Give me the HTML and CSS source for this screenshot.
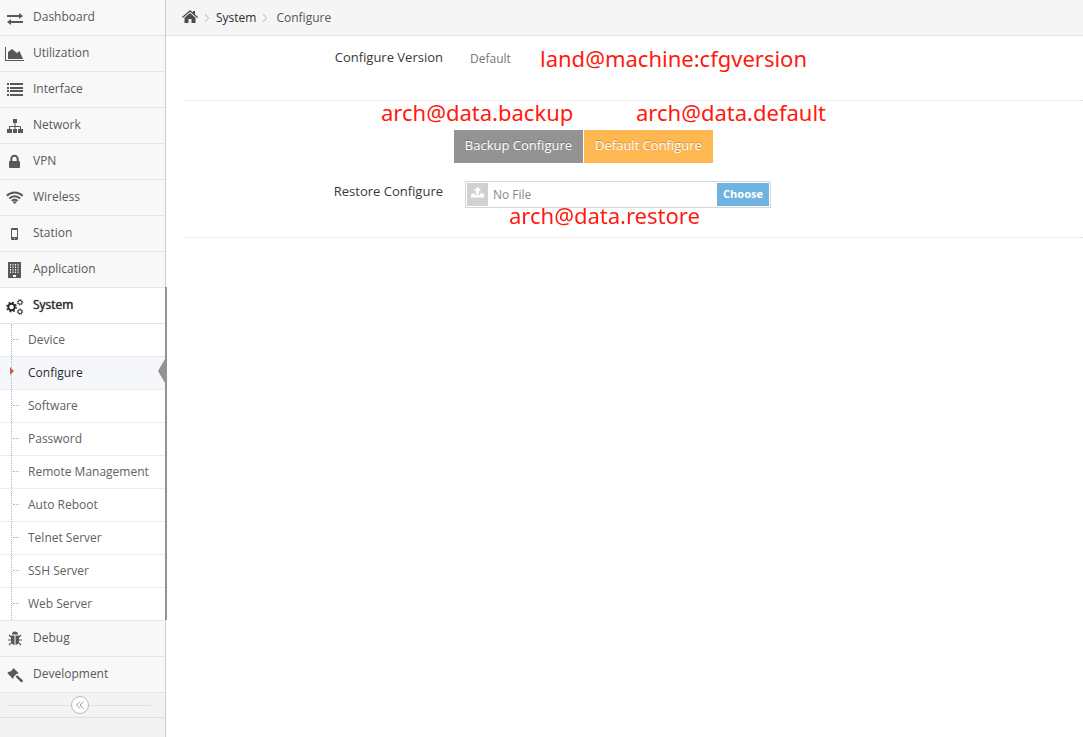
FILE: index.html
```html
<!DOCTYPE html>
<html lang="en">
<head>
<meta charset="utf-8">
<title>System - Configure</title>
<link rel="stylesheet" href="styles.css">
</head>
<body>
<div class="layout">
  <nav class="sidebar" aria-label="Main">
    <ul class="menu">
      <li><a href="#"><svg class="icon" viewBox="0 0 20 18"><path d="M2 5h12V3l4 3-4 3V7H2zM18 11H6V9l-4 3 4 3v-2h12z"/></svg><span>Dashboard</span></a></li>
      <li><a href="#"><svg class="icon" viewBox="0 0 20 18"><path d="M0 1h1v13h18v1H0z"/><path d="M3 13V6l4-3 5 4 2.500-2L18 13z"/></svg><span>Utilization</span></a></li>
      <li><a href="#"><svg class="icon" viewBox="0 0 20 18"><path d="M2 1h2v2H2zM5 1h13v2H5zM2 5h2v2H2zM5 5h13v2H5zM2 8h2v2H2zM5 8h13v2H5zM2 12h2v2H2zM5 12h13v2H5z"/></svg><span>Interface</span></a></li>
      <li><a href="#"><svg class="icon" viewBox="0 0 20 18"><path d="M8 1h4v4H8zM2 11h5v4H2zM8 11h4v4H8zM13 11h5v4h-5z"/><path d="M10 5v7M4.500 12V8.500h11V12" fill="none" stroke="currentColor"/></svg><span>Network</span></a></li>
      <li><a href="#"><svg class="icon" viewBox="0 0 20 18"><rect x="4" y="7" width="11" height="7" rx="1"/><path d="M6.300 8V5a3.200 3.200 0 0 1 6.400 0v3" fill="none" stroke="currentColor" stroke-width="2"/></svg><span>VPN</span></a></li>
      <li><a href="#"><svg class="icon" viewBox="0 0 20 18"><path d="M1.800 5.800a11.300 11.300 0 0 1 15.800 0M4.300 8.500a7.600 7.600 0 0 1 10.800 0M6.900 11a4 4 0 0 1 5.600 0" fill="none" stroke="currentColor" stroke-width="2"/><path d="M7.900 12.200a2.500 2.500 0 0 1 3.600 0L9.700 14z"/></svg><span>Wireless</span></a></li>
      <li><a href="#"><svg class="icon" viewBox="0 0 20 18"><path fill-rule="evenodd" d="M7 2h5q1 0 1 1v10q0 1-1 1H7q-1 0-1-1V3q0-1 1-1zm0 2v7h5V4zm2 8v1h1v-1z"/></svg><span>Station</span></a></li>
      <li><a href="#"><svg class="icon" viewBox="0 0 20 18"><path d="M3 0h13v16H3z"/><path d="M5.500 2v10M8 2v10M10.500 2v10M13 2v10" stroke="#f8f8f8" stroke-dasharray="1.500 1"/><path d="M8 13h3v2H8z" fill="#f8f8f8"/></svg><span>Application</span></a></li>
      <li class="open">
        <a href="#" aria-expanded="true"><svg class="icon" viewBox="0 0 20 18"><g fill="none" stroke="currentColor"><circle cx="6.500" cy="9" r="3.200" stroke-width="1.900"/><circle cx="6.500" cy="9" r="4.600" stroke-width="1.600" stroke-dasharray="1.800 1.810"/><circle cx="15" cy="4.300" r="1.900"/><circle cx="15" cy="4.300" r="2.700" stroke-dasharray="1.100 1.020"/><circle cx="15" cy="13.700" r="1.900"/><circle cx="15" cy="13.700" r="2.700" stroke-dasharray="1.100 1.020"/></g></svg><span>System</span></a>
        <ul class="submenu">
          <li><a href="#">Device</a></li>
          <li class="active"><a href="#" aria-current="page">Configure</a></li>
          <li><a href="#">Software</a></li>
          <li><a href="#">Password</a></li>
          <li><a href="#">Remote Management</a></li>
          <li><a href="#">Auto Reboot</a></li>
          <li><a href="#">Telnet Server</a></li>
          <li><a href="#">SSH Server</a></li>
          <li><a href="#">Web Server</a></li>
        </ul>
      </li>
      <li><a href="#"><svg class="icon" viewBox="0 0 20 18"><path d="M7 3.500a3 3 0 0 1 6 0zM6 4.500h3.500V14Q6 13.500 6 10zM10.500 4.500H14V10q0 3.500-3.500 4z"/><path d="M6.500 6.500L4 4M13.500 6.500L16 4M6 9H3M14 9h3M6.500 11.500L4 14M13.500 11.500L16 14" fill="none" stroke="currentColor" stroke-width="1.200"/></svg><span>Debug</span></a></li>
      <li><a href="#"><svg class="icon" viewBox="0 0 20 18"><path d="M8.500 1l5 5-1 1-.8-.3-1.200 1.300 1 1 .8-.8 5.400 5q.6.900-.2 1.700t-1.700.2l-5.200-5.400.7-.7-1-1-1.700 1.700.3.800-1.200 1.200L2.300 6l1.200-1.200.8.300L7.700 2.700 7.500 2z"/></svg><span>Development</span></a></li>
    </ul>
    <div class="collapse">
      <button type="button" aria-label="Collapse sidebar"><svg viewBox="0 0 10 10"><path d="M5 1.500L1.500 5 5 8.500M8.500 1.500L5 5l3.500 3.500"/></svg></button>
    </div>
  </nav>

  <div class="main">
    <nav class="breadcrumb" aria-label="Breadcrumb">
      <a href="#" aria-label="Home"><svg class="home" viewBox="0 0 16 14"><path d="M0 7l8-7 3 2.600V1h2v3.400L16 7l-.8 1L8 1.800.8 8z"/><path d="M8 3l5.500 4.700V13H9.500V9h-3v4h-4V7.700z"/></svg></a>
      <svg class="chevron" viewBox="0 0 6 8"><path d="M1 0l3.500 4L1 8"/></svg>
      <a href="#">System</a>
      <svg class="chevron" viewBox="0 0 6 8"><path d="M1 0l3.500 4L1 8"/></svg>
      <span class="current">Configure</span>
    </nav>
    <main class="content">
      <section class="row version">
        <span class="label">Configure Version</span>
        <span class="value">Default</span>
        <span class="note note-version">land@machine:cfgversion</span>
      </section>
      <section class="panel">
        <span class="note note-backup">arch@data.backup</span>
        <span class="note note-default">arch@data.default</span>
        <div class="actions">
          <button type="button" class="btn">Backup Configure</button>
          <button type="button" class="btn btn-warning">Default Configure</button>
        </div>
        <div class="row restore">
          <label class="label" for="restore-file">Restore Configure</label>
          <div class="file">
            <span class="upload"><svg viewBox="0 0 14 13"><path d="M7 0l4 4H8.500v4h-3V4H3z"/><path d="M1 7h3.500v2h5V7H13q1 0 1 1v2.500q0 1-1 1H1q-1 0-1-1V8q0-1 1-1z"/></svg></span>
            <span class="filename">No File</span>
            <span class="choose">Choose</span>
            <input type="file" id="restore-file">
          </div>
          <span class="note note-restore">arch@data.restore</span>
        </div>
      </section>
    </main>
  </div>
</div>
</body>
</html>
```

FILE: styles.css
```css
* { box-sizing: border-box; }
body {
  margin: 0;
  font: 12px/20px "Open Sans", sans-serif;
  color: #393939;
  background: #fff;
}
ul { list-style: none; margin: 0; padding: 0; }
a { color: inherit; text-decoration: none; }
svg { display: block; flex: none; fill: currentColor; }

.layout { display: flex; min-height: 100vh; }
.sidebar {
  flex: 0 0 166px;
  background: #f2f2f2;
  border-right: 1px solid #ccc;
}
.main { flex: 1; min-width: 0; }

.menu > li > a {
  display: flex;
  align-items: center;
  gap: 8px;
  height: 36px;
  padding: 0 5px;
  border-bottom: 1px solid #e5e5e5;
  background: #f8f8f8;
  color: #585858;
}
.menu > li > a span { padding-bottom: 1px; }
.icon { width: 20px; height: 18px; margin-top: 2px; }
.menu > .open {
  position: relative;
  border-bottom: 1px solid #e5e5e5;
}
.menu > .open > a {
  background: #fff;
  color: #2b2b2b;
  text-shadow: 0 0 1px #2b2b2b;
}
.open::after {
  content: "";
  position: absolute;
  top: -1px;
  right: -2px;
  bottom: 0;
  width: 2px;
  background: #939393;
}

.submenu { position: relative; background: #fff; }
.submenu::before {
  content: "";
  position: absolute;
  z-index: 1;
  top: 0;
  bottom: 0;
  left: 11px;
  border-left: 1px dotted #9dbdd6;
}
.submenu li { position: relative; border-top: 1px dotted #ddd; }
.submenu li:first-child { border-top: 0; }
.submenu a {
  display: block;
  height: 32px;
  padding: 6px 0 6px 28px;
  color: #616161;
}
.submenu li::before {
  content: "";
  position: absolute;
  top: 15px;
  left: 13px;
  width: 6px;
  border-top: 1px dotted #9dbdd6;
}
.submenu .active { background: #f5f7fa; }
.submenu .active a { color: #2b2b2b; }
.submenu .active::before {
  z-index: 2;
  top: 10px;
  left: 10px;
  width: 4px;
  height: 8px;
  border: 0;
  background: #c86139;
  clip-path: polygon(0 0, 100% 50%, 0 100%);
}
.submenu .active::after {
  content: "";
  position: absolute;
  top: 2px;
  right: 0;
  width: 7px;
  height: 24px;
  background: #939393;
  clip-path: polygon(100% 0, 0 50%, 100% 100%);
}

.collapse {
  display: flex;
  align-items: center;
  justify-content: center;
  height: 25px;
  padding: 0 14px 0 8px;
  border-bottom: 1px solid #e0e0e0;
  background: #f3f3f3;
}
.collapse::before, .collapse::after {
  content: "";
  flex: 1;
  border-top: 1px solid #e0e0e0;
}
.collapse button {
  display: grid;
  place-items: center;
  width: 18px;
  height: 18px;
  padding: 0;
  border: 1px solid #bbb;
  border-radius: 50%;
  background: #fff;
  color: #999;
}
.collapse svg {
  width: 10px;
  height: 10px;
  fill: none;
  stroke: currentColor;
}

.breadcrumb {
  display: flex;
  align-items: center;
  height: 36px;
  padding-left: 16px;
  border-bottom: 1px solid #e5e5e5;
  background: #f5f5f5;
  color: #2b2b2b;
}
.home { width: 16px; height: 14px; margin-bottom: 2px; color: #4c4c4c; }
.chevron {
  width: 6px;
  height: 8px;
  margin: 0 6px;
  fill: none;
  stroke: #b2b6bf;
}
.breadcrumb .current { color: #555; margin-left: 2px; }

.content { padding: 11px 0 0 18px; }
.row {
  position: relative;
  display: grid;
  grid-template-columns: 259px 1fr;
  align-items: start;
}
.label { text-align: right; font-size: 13px; }
.version {
  height: 54px;
  border-bottom: 1px dotted #ddd;
}
.value { padding: 2px 0 0 27px; color: #777; }
.panel {
  position: relative;
  padding: 29px 0;
  border-bottom: 1px dotted #ddd;
}
.actions {
  display: flex;
  gap: 1px;
  padding-left: 270px;
}
.btn {
  height: 33px;
  min-width: 129px;
  padding: 0 0 3px;
  border: 0;
  background: #939393;
  color: #fff;
  font: inherit;
  font-size: 13px;
  text-shadow: 0 -1px 0 rgba(0, 0, 0, 0.25);
}
.btn-warning { background: #ffb752; }
.restore { margin-top: 18px; }
.file {
  position: relative;
  display: flex;
  align-items: stretch;
  width: 306px;
  height: 27px;
  margin-left: 22px;
  padding: 1px;
  border: 1px solid #d5d5d5;
}
.file input {
  position: absolute;
  inset: 0;
  width: 100%;
  opacity: 0;
}
.upload {
  width: 21px;
  padding: 4px 4px 0;
  background: #d1d1d1;
  color: #fff;
}
.upload svg { width: 13px; height: 12px; }
.filename { flex: 1; padding: 2px 5px 0; color: #888; }
.choose {
  min-width: 52px;
  padding-top: 1px;
  background: #6fb3e0;
  color: #fff;
  font-size: 11px;
  font-weight: 700;
  text-align: center;
}

.note {
  position: absolute;
  color: #ff1a0f;
  font: 22px/28px "Noto Sans", "Open Sans", sans-serif;
  white-space: nowrap;
  pointer-events: none;
}
.note-version { top: -3px; left: 356px; }
.note-backup { top: -3px; left: 197px; }
.note-default { top: -3px; left: 452px; }
.note-restore { top: 20px; left: 325px; }
```
